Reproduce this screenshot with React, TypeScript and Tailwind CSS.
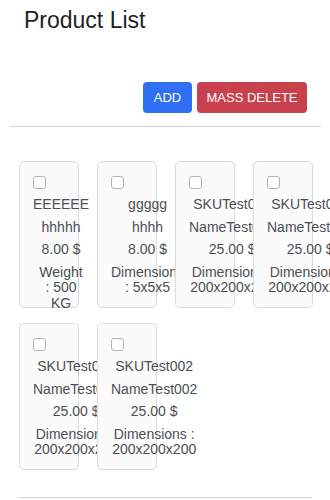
type Product = {
  sku: string;
  name: string;
  price: string;
  attr: string[];
};

const products: Product[] = [
  { sku: 'EEEEEE', name: 'hhhhh', price: '8.00 $', attr: ['Weight', ': 500', 'KG'] },
  { sku: 'ggggg', name: 'hhhh', price: '8.00 $', attr: ['Dimensions', ': 5x5x5'] },
  { sku: 'SKUTest002', name: 'NameTest002', price: '25.00 $', attr: ['Dimensions :', '200x200x200'] },
  { sku: 'SKUTest002', name: 'NameTest002', price: '25.00 $', attr: ['Dimensions :', '200x200x200'] },
  { sku: 'SKUTest002', name: 'NameTest002', price: '25.00 $', attr: ['Dimensions :', '200x200x200'] },
  { sku: 'SKUTest002', name: 'NameTest002', price: '25.00 $', attr: ['Dimensions :', '200x200x200'] },
];

/**
 * Single product card; text is allowed to spill over the card edge
 */
function ProductCard({ product }: { product: Product }) {
  return (
    <div className="relative w-[60px] h-[147px] shrink-0 rounded-[5px] border border-[#dcdcdc] bg-[#fbfbfb] pt-[14px] px-[13px]">
      <div className="w-min">
        <input
          type="checkbox"
          className="block appearance-none w-[13px] h-[13px] rounded-[3px] border border-[#b3b3b3] bg-white"
        />
        <div className="mt-[8px] flex flex-col gap-[7px] text-center text-[14px] leading-[15.5px] text-[#4b4f54]">
          <p>{product.sku}</p>
          <p>{product.name}</p>
          <p>{product.price}</p>
          <p className="whitespace-nowrap">
            {product.attr.map((line, i) => (
              <span key={i} className="block">
                {line}
              </span>
            ))}
          </p>
        </div>
      </div>
    </div>
  );
}

export default function App() {
  return (
    <div className="w-[330px] h-[500px] overflow-hidden bg-white font-['Liberation_Sans',Arial,sans-serif]">
      {/* Header */}
      <h1 className="pl-[24px] pt-[6px] text-[23px] leading-[28px] font-medium text-[#1d1f22]">
        Product List
      </h1>

      <div className="mt-[48px] flex justify-end gap-[5px] pr-[23px]">
        <button className="h-[31px] w-[49px] rounded-[4px] bg-[#2f6ff3] text-[13px] text-white">
          ADD
        </button>
        <button className="h-[31px] w-[110px] rounded-[4px] bg-[#c9414d] text-[13px] text-white">
          MASS DELETE
        </button>
      </div>

      <hr className="mt-[13px] ml-[10px] mr-[9px] border-0 border-t border-[#d6d6d6]" />

      {/* Product grid */}
      <div className="mt-[34px] flex flex-wrap gap-x-[18px] gap-y-[15px] pl-[19px]">
        {products.map((p, i) => (
          <ProductCard key={i} product={p} />
        ))}
      </div>

      <hr className="mt-[27px] ml-[18px] mr-[18px] border-0 border-t border-[#d6d6d6]" />
    </div>
  );
}
